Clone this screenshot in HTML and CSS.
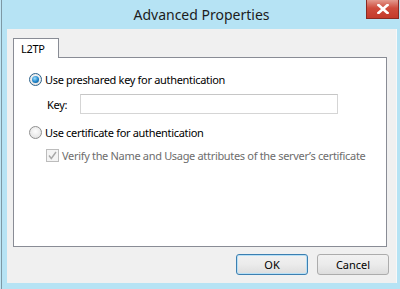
FILE: index.html
```html
<!DOCTYPE html>
<html lang="en">
<head>
<meta charset="UTF-8">
<title>Advanced Properties</title>
<link rel="stylesheet" href="styles.css">
</head>
<body>

<div class="window">
  <div class="titlebar">
    <span></span>
    <div class="title">Advanced Properties</div>
    <button class="close-button">
      <svg width="12" height="10" viewBox="0 0 12 10">
        <path d="M1.5 1 L10.5 9 M10.5 1 L1.5 9" stroke="#fff" stroke-width="2.6" stroke-linecap="square"/>
      </svg>
    </button>
  </div>

  <div class="client">
    <div class="tabs">
      <div class="tab active">L2TP</div>
    </div>

    <div class="panel">
      <label class="option">
        <span class="radio checked"></span>
        <span>Use preshared key for authentication</span>
      </label>

      <div class="key-row">
        <span class="key-label">Key:</span>
        <input type="text" class="key-input">
      </div>

      <label class="option">
        <span class="radio"></span>
        <span>Use certificate for authentication</span>
      </label>

      <label class="option sub disabled">
        <span class="checkbox">
          <svg width="11" height="11" viewBox="0 0 11 11">
            <path d="M2 5.5 L4.3 8.5 L9 2" fill="none" stroke="#a8a8a8" stroke-width="1.4"/>
          </svg>
        </span>
        <span>Verify the Name and Usage attributes of the server’s certificate</span>
      </label>
    </div>

    <div class="dialog-buttons">
      <button class="dialog-button default">OK</button>
      <button class="dialog-button">Cancel</button>
    </div>
  </div>
</div>

</body>
</html>
```

FILE: styles.css
```css
html, body {
  margin: 0;
  padding: 0;
}

body {
  width: 400px;
  height: 289px;
  overflow: hidden;
  font-family: "Noto Sans", sans-serif;
  font-size: 11px;
  letter-spacing: -0.32px;
  color: #000;
  background: #bfe6f5;
}

.window {
  box-sizing: border-box;
  width: 400px;
  height: 289px;
  margin-left: 1px;
  border-left: 1px solid #7d98a4;
  background: #b6e3f4;
  display: flex;
  flex-direction: column;
}

.titlebar {
  height: 29px;
  display: grid;
  grid-template-columns: 1fr auto 1fr;
  align-items: start;
}

.title {
  font-size: 14px;
  letter-spacing: 0;
  color: #1c1c1c;
  line-height: 30px;
}

.close-button {
  justify-self: end;
  margin-right: 2px;
  width: 33px;
  height: 19px;
  padding: 0;
  border: 1px solid #8a2a22;
  border-top: none;
  background: linear-gradient(#e39a8e, #cf4c3c 45%, #c43a2b);
  display: flex;
  align-items: center;
  justify-content: center;
}

.client {
  flex: 1;
  margin: 0 4px 6px 5px;
  background: #f0f0f0;
  border-right: 1px solid #f8f8f8;
  padding: 9px 0 0 6px;
  display: flex;
  flex-direction: column;
}

.tabs {
  display: flex;
  height: 19px;
}

.tab {
  box-sizing: border-box;
  width: 46px;
  height: 20px;
  padding: 2px 0 0 7px;
  background: #fff;
  border: 1px solid #898c95;
  border-bottom: none;
  position: relative;
  z-index: 1;
}

.panel {
  box-sizing: border-box;
  width: 374px;
  height: 190px;
  background: #fff;
  border: 1px solid #898c95;
  padding: 14px 0 0 15px;
  display: flex;
  flex-direction: column;
}

.option {
  display: flex;
  align-items: center;
  gap: 3px;
  height: 14px;
}

.radio {
  box-sizing: border-box;
  width: 13px;
  height: 13px;
  border-radius: 50%;
  border: 1px solid #8f8f8f;
  background: radial-gradient(circle at 50% 40%, #fdfdfd, #dcdcdc);
  display: flex;
  align-items: center;
  justify-content: center;
}

.radio.checked {
  border-color: #2c628b;
}

.radio.checked::after {
  content: "";
  width: 7px;
  height: 7px;
  border-radius: 50%;
  background: radial-gradient(circle at 40% 35%, #9fe0ff, #1d83c9 55%, #0b4a7a);
}

.key-row {
  display: flex;
  align-items: center;
  margin: 8px 0 0 18px;
  height: 20px;
}

.key-label {
  width: 33px;
}

.key-input {
  box-sizing: border-box;
  width: 258px;
  height: 20px;
  margin: 0;
  border: 1px solid #d5d5d5;
  border-top-color: #c6c6c6;
  background: #fff;
}

.key-row + .option {
  margin-top: 11px;
}

.option.sub {
  margin: 9px 0 0 17px;
}

.option.disabled {
  color: #6d6d6d;
}

.checkbox {
  box-sizing: border-box;
  width: 13px;
  height: 13px;
  border: 1px solid #bcbcbc;
  background: #f4f4f4;
  display: flex;
  align-items: center;
  justify-content: center;
}

.dialog-buttons {
  display: flex;
  justify-content: flex-end;
  gap: 9px;
  margin: 7px 7px 0 0;
}

.dialog-button {
  box-sizing: border-box;
  width: 72px;
  height: 21px;
  padding: 0;
  font-family: "Noto Sans", sans-serif;
  font-size: 11px;
  color: #000;
  border: 1px solid #acacac;
  border-radius: 3px;
  background: linear-gradient(#f2f2f2, #ebebeb 50%, #dddddd);
}

.dialog-button.default {
  border-color: #3c7fb1;
  box-shadow: inset 0 0 0 1px #b8e0f6;
}
```
